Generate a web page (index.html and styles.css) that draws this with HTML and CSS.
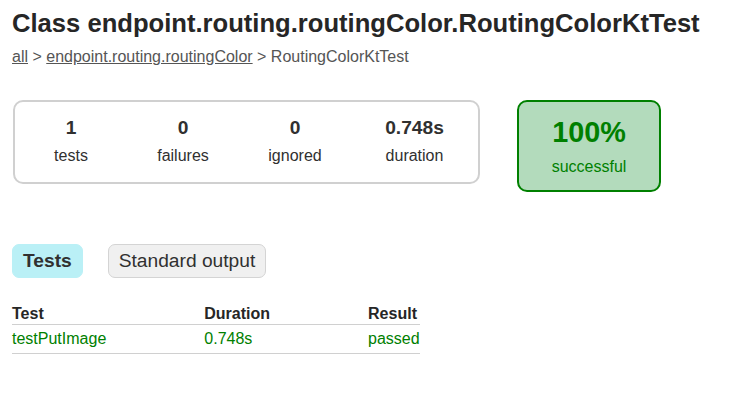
FILE: index.html
```html
<!DOCTYPE html>
<html>
<head>
<meta charset="utf-8">
<title>Test results - Class endpoint.routing.routingColor.RoutingColorKtTest</title>
<link rel="stylesheet" href="styles.css">
</head>
<body>
<div class="content">
  <h1 class="title">Class endpoint.routing.routingColor.RoutingColorKtTest</h1>
  <div class="breadcrumbs">
    <a href="#">all</a> &gt; <a href="#">endpoint.routing.routingColor</a> &gt; RoutingColorKtTest
  </div>
  <div class="summary">
    <div class="summary-group">
      <div class="info-box">
        <div class="counter">1</div>
        <p>tests</p>
      </div>
      <div class="info-box">
        <div class="counter">0</div>
        <p>failures</p>
      </div>
      <div class="info-box">
        <div class="counter">0</div>
        <p>ignored</p>
      </div>
      <div class="info-box duration">
        <div class="counter">0.748s</div>
        <p>duration</p>
      </div>
    </div>
    <div class="success-rate">
      <div class="percent">100%</div>
      <p>successful</p>
    </div>
  </div>
  <ul class="tab-links">
    <li class="tab selected"><a href="#">Tests</a></li>
    <li class="tab"><a href="#">Standard output</a></li>
  </ul>
  <table class="results">
    <thead>
      <tr><th>Test</th><th>Duration</th><th>Result</th></tr>
    </thead>
    <tbody>
      <tr class="success"><td>testPutImage</td><td>0.748s</td><td>passed</td></tr>
    </tbody>
  </table>
</div>
</body>
</html>
```

FILE: styles.css
```css
html, body {
  margin: 0;
  padding: 0;
  background: #ffffff;
}
body {
  font-family: "Liberation Sans", Arial, sans-serif;
  font-size: 16px;
  color: #303030;
}
a, a:visited {
  color: #303030;
}
.content {
  padding: 9px 12px 0 12px;
}
.title {
  font-size: 25.6px;
  font-weight: bold;
  margin: 0 0 10px 0;
  white-space: nowrap;
  color: #262626;
}
.breadcrumbs {
  color: #555555;
  line-height: 18px;
}
.breadcrumbs a {
  color: #555555;
}
.summary {
  display: flex;
  align-items: flex-start;
  margin-top: 34px;
}
.summary-group {
  display: flex;
  border: solid 2px #d0d0d0;
  border-radius: 10px;
  margin-left: 1px;
}
.info-box {
  width: 110px;
  padding: 15px 1px 17px 1px;
  text-align: center;
}
.info-box.duration {
  width: 125px;
}
.info-box p, .success-rate p {
  margin: 0;
  line-height: 18px;
}
.counter {
  font-size: 19.2px;
  font-weight: bold;
  line-height: 22px;
  margin-bottom: 8px;
}
.success-rate {
  width: 140px;
  margin-left: 37px;
  border: solid 2px #008000;
  border-radius: 10px;
  background-color: #b3dbbc;
  color: #008000;
  text-align: center;
  padding: 14px 0 14px 0;
}
.percent {
  font-size: 28.8px;
  font-weight: bold;
  line-height: 32px;
  margin-bottom: 10px;
}
.tab-links {
  display: flex;
  list-style: none;
  margin: 52px 0 0 0;
  padding: 0;
}
.tab {
  padding: 5px 10px;
  border: solid 1px #d4d4d4;
  background-color: #f0f0f0;
  border-radius: 7px;
  margin-right: 25px;
}
.tab.selected {
  background-color: #baf0f6;
  border-color: #baf0f6;
}
.tab a {
  display: block;
  font-size: 19.2px;
  line-height: 22px;
  text-decoration: none;
}
.tab.selected a {
  font-weight: bold;
}
.results {
  border-collapse: collapse;
  border-bottom: solid #d0d0d0 1px;
  margin-top: 26px;
}
.results th {
  text-align: left;
  white-space: nowrap;
  padding: 1px 0 1px 98px;
  border-bottom: solid #d0d0d0 1px;
  line-height: 18px;
  color: #262626;
}
.results td {
  white-space: nowrap;
  padding: 5px 0 5px 98px;
  line-height: 18px;
}
.results th:first-child, .results td:first-child {
  padding-left: 0;
}
.results tr.success td {
  color: #008000;
}
```
